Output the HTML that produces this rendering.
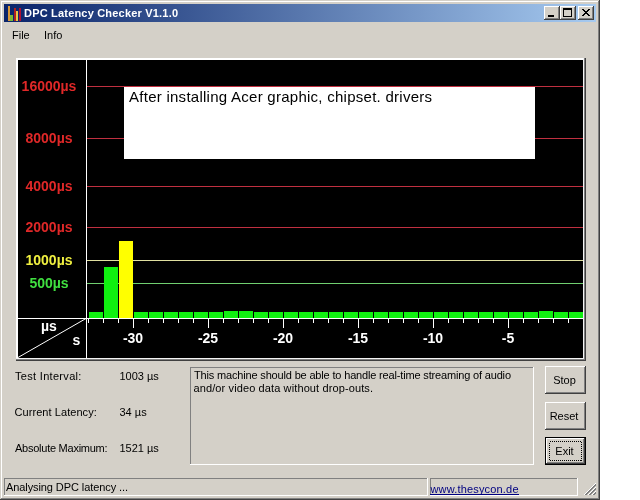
<!DOCTYPE html>
<html><head><meta charset="utf-8">
<style>
html,body{margin:0;padding:0;background:#fff;width:640px;height:500px;overflow:hidden}
svg{display:block;will-change:transform}
text{font-family:"Liberation Sans",sans-serif}
</style></head>
<body>
<svg width="640" height="500" viewBox="0 0 640 500" xmlns="http://www.w3.org/2000/svg" shape-rendering="crispEdges">
<defs>
<linearGradient id="tg" x1="0" y1="0" x2="1" y2="0">
<stop offset="0" stop-color="#0a246a"/>
<stop offset="1" stop-color="#a6caf0"/>
</linearGradient>
</defs>
<rect x="0" y="0" width="640" height="500" fill="#fff"/>
<!-- window frame -->
<rect x="0" y="0" width="600" height="500" fill="#404040"/>
<rect x="0" y="0" width="599" height="499" fill="#d4d0c8"/>
<rect x="1" y="1" width="598" height="498" fill="#808080"/>
<rect x="1" y="1" width="597" height="497" fill="#fff"/>
<rect x="2" y="2" width="596" height="496" fill="#d4d0c8"/>
<!-- title bar -->
<rect x="4" y="4" width="592" height="18" fill="url(#tg)"/>
<!-- icon -->
<rect x="8" y="6" width="2" height="15" fill="#d89838"/>
<rect x="10" y="15" width="3" height="6" fill="#78b838"/>
<rect x="14" y="8" width="2" height="13" fill="#b02020"/>
<rect x="16" y="11" width="2" height="10" fill="#e8c848"/>
<rect x="19" y="8" width="2" height="13" fill="#b01030"/>
<text x="24" y="17" font-size="11" font-weight="bold" fill="#fff" textLength="154" lengthAdjust="spacing">DPC Latency Checker V1.1.0</text>
<!-- caption buttons -->
<g>
<rect x="544" y="6" width="16" height="14" fill="#404040"/>
<rect x="544" y="6" width="15" height="13" fill="#fff"/>
<rect x="545" y="7" width="14" height="12" fill="#808080"/>
<rect x="545" y="7" width="13" height="11" fill="#d4d0c8"/>
<rect x="548" y="15" width="6" height="2" fill="#000"/>
</g>
<g>
<rect x="560" y="6" width="16" height="14" fill="#404040"/>
<rect x="560" y="6" width="15" height="13" fill="#fff"/>
<rect x="561" y="7" width="14" height="12" fill="#808080"/>
<rect x="561" y="7" width="13" height="11" fill="#d4d0c8"/>
<rect x="563" y="8" width="9" height="9" fill="#000"/>
<rect x="564" y="10" width="7" height="6" fill="#d4d0c8"/>
</g>
<g>
<rect x="578" y="6" width="16" height="14" fill="#404040"/>
<rect x="578" y="6" width="15" height="13" fill="#fff"/>
<rect x="579" y="7" width="14" height="12" fill="#808080"/>
<rect x="579" y="7" width="13" height="11" fill="#d4d0c8"/>
<rect x="582" y="9" width="1" height="1" fill="#000"/><rect x="583" y="9" width="1" height="1" fill="#000"/><rect x="588" y="9" width="1" height="1" fill="#000"/><rect x="589" y="9" width="1" height="1" fill="#000"/><rect x="583" y="10" width="1" height="1" fill="#000"/><rect x="584" y="10" width="1" height="1" fill="#000"/><rect x="587" y="10" width="1" height="1" fill="#000"/><rect x="588" y="10" width="1" height="1" fill="#000"/><rect x="584" y="11" width="1" height="1" fill="#000"/><rect x="585" y="11" width="1" height="1" fill="#000"/><rect x="586" y="11" width="1" height="1" fill="#000"/><rect x="587" y="11" width="1" height="1" fill="#000"/><rect x="585" y="12" width="1" height="1" fill="#000"/><rect x="586" y="12" width="1" height="1" fill="#000"/><rect x="584" y="13" width="1" height="1" fill="#000"/><rect x="585" y="13" width="1" height="1" fill="#000"/><rect x="586" y="13" width="1" height="1" fill="#000"/><rect x="587" y="13" width="1" height="1" fill="#000"/><rect x="583" y="14" width="1" height="1" fill="#000"/><rect x="584" y="14" width="1" height="1" fill="#000"/><rect x="587" y="14" width="1" height="1" fill="#000"/><rect x="588" y="14" width="1" height="1" fill="#000"/><rect x="582" y="15" width="1" height="1" fill="#000"/><rect x="583" y="15" width="1" height="1" fill="#000"/><rect x="588" y="15" width="1" height="1" fill="#000"/><rect x="589" y="15" width="1" height="1" fill="#000"/>
</g>
<!-- menu -->
<text x="12" y="39" font-size="11" fill="#000">File</text>
<text x="44" y="39" font-size="11" fill="#000">Info</text>

<!-- chart panel -->
<rect x="16" y="58" width="570" height="303" fill="#404040"/>
<rect x="16" y="58" width="569" height="302" fill="#808080"/>
<rect x="16" y="58" width="568" height="301" fill="#f4f4f4"/>
<rect x="16" y="58" width="567" height="300" fill="#fff"/>
<rect x="18" y="60" width="565" height="298" fill="#000"/>

<!-- grid lines -->
<rect x="87" y="86" width="496" height="1" fill="#c03040"/>
<rect x="87" y="138" width="496" height="1" fill="#c03040"/>
<rect x="87" y="186" width="496" height="1" fill="#c03040"/>
<rect x="87" y="227" width="496" height="1" fill="#c03040"/>
<rect x="87" y="260" width="496" height="1" fill="#e0e0a0"/>
<rect x="87" y="283" width="496" height="1" fill="#70d070"/>

<!-- labels -->
<g font-size="14" font-weight="bold" text-anchor="middle">
<text x="49" y="91" fill="#e02828">16000µs</text>
<text x="49" y="143" fill="#e02828">8000µs</text>
<text x="49" y="191" fill="#e02828">4000µs</text>
<text x="49" y="232" fill="#e02828">2000µs</text>
<text x="49" y="265" fill="#f0f040">1000µs</text>
<text x="49" y="288" fill="#40e040">500µs</text>
</g>

<!-- white annotation box -->
<rect x="124" y="87" width="411" height="72" fill="#fff"/>
<text x="129" y="102" font-size="15" fill="#000" textLength="303" lengthAdjust="spacing">After installing Acer graphic, chipset. drivers</text>

<!-- bars -->
<g id="bars" fill="#10f010"><rect x="89" y="312" width="14" height="6"/><rect x="104" y="267" width="14" height="51"/><rect x="119" y="241" width="14" height="77" fill="#ffff00"/><rect x="134" y="312" width="14" height="6"/><rect x="149" y="312" width="14" height="6"/><rect x="164" y="312" width="14" height="6"/><rect x="179" y="312" width="14" height="6"/><rect x="194" y="312" width="14" height="6"/><rect x="209" y="312" width="14" height="6"/><rect x="224" y="311" width="14" height="7"/><rect x="239" y="311" width="14" height="7"/><rect x="254" y="312" width="14" height="6"/><rect x="269" y="312" width="14" height="6"/><rect x="284" y="312" width="14" height="6"/><rect x="299" y="312" width="14" height="6"/><rect x="314" y="312" width="14" height="6"/><rect x="329" y="312" width="14" height="6"/><rect x="344" y="312" width="14" height="6"/><rect x="359" y="312" width="14" height="6"/><rect x="374" y="312" width="14" height="6"/><rect x="389" y="312" width="14" height="6"/><rect x="404" y="312" width="14" height="6"/><rect x="419" y="312" width="14" height="6"/><rect x="434" y="312" width="14" height="6"/><rect x="449" y="312" width="14" height="6"/><rect x="464" y="312" width="14" height="6"/><rect x="479" y="312" width="14" height="6"/><rect x="494" y="312" width="14" height="6"/><rect x="509" y="312" width="14" height="6"/><rect x="524" y="312" width="14" height="6"/><rect x="539" y="311" width="14" height="7"/><rect x="554" y="312" width="14" height="6"/><rect x="569" y="312" width="14" height="6"/></g>

<!-- axes -->
<rect x="86" y="60" width="1" height="298" fill="#fff"/>
<rect x="18" y="318" width="565" height="1" fill="#fff"/>
<line x1="18" y1="357.5" x2="86" y2="318.5" stroke="#fff" stroke-width="1" shape-rendering="auto"/>
<g id="ticks" fill="#fff"><rect x="88" y="319" width="1" height="4"/><rect x="103" y="319" width="1" height="4"/><rect x="118" y="319" width="1" height="4"/><rect x="133" y="319" width="1" height="9"/><rect x="148" y="319" width="1" height="4"/><rect x="163" y="319" width="1" height="4"/><rect x="178" y="319" width="1" height="4"/><rect x="193" y="319" width="1" height="4"/><rect x="208" y="319" width="1" height="9"/><rect x="223" y="319" width="1" height="4"/><rect x="238" y="319" width="1" height="4"/><rect x="253" y="319" width="1" height="4"/><rect x="268" y="319" width="1" height="4"/><rect x="283" y="319" width="1" height="9"/><rect x="298" y="319" width="1" height="4"/><rect x="313" y="319" width="1" height="4"/><rect x="328" y="319" width="1" height="4"/><rect x="343" y="319" width="1" height="4"/><rect x="358" y="319" width="1" height="9"/><rect x="373" y="319" width="1" height="4"/><rect x="388" y="319" width="1" height="4"/><rect x="403" y="319" width="1" height="4"/><rect x="418" y="319" width="1" height="4"/><rect x="433" y="319" width="1" height="9"/><rect x="448" y="319" width="1" height="4"/><rect x="463" y="319" width="1" height="4"/><rect x="478" y="319" width="1" height="4"/><rect x="493" y="319" width="1" height="4"/><rect x="508" y="319" width="1" height="9"/><rect x="523" y="319" width="1" height="4"/><rect x="538" y="319" width="1" height="4"/><rect x="553" y="319" width="1" height="4"/><rect x="568" y="319" width="1" height="4"/></g>
<g font-size="14" font-weight="bold" fill="#fff">
<text x="41" y="331">µs</text>
<text x="72.5" y="345">s</text>
</g>
<g id="xlabels" font-size="14" font-weight="bold" fill="#fff" text-anchor="middle"><text x="133" y="343">-30</text><text x="208" y="343">-25</text><text x="283" y="343">-20</text><text x="358" y="343">-15</text><text x="433" y="343">-10</text><text x="508" y="343">-5</text></g>

<!-- info labels -->
<g font-size="11" fill="#000">
<text x="15" y="380" textLength="66.4" lengthAdjust="spacing">Test Interval:</text>
<text x="14.5" y="416" textLength="82.3" lengthAdjust="spacing">Current Latency:</text>
<text x="15" y="452" textLength="92.6" lengthAdjust="spacing">Absolute Maximum:</text>
<text x="119.5" y="380">1003 µs</text>
<text x="119.5" y="416">34 µs</text>
<text x="119.5" y="452">1521 µs</text>
</g>

<!-- message box -->
<rect x="190" y="367" width="344" height="98" fill="#fff"/>
<rect x="190" y="367" width="343" height="97" fill="#808080"/>
<rect x="191" y="368" width="342" height="96" fill="#d4d0c8"/>
<g font-size="11" fill="#000">
<text x="194" y="379" textLength="317" lengthAdjust="spacing">This machine should be able to handle real-time streaming of audio</text>
<text x="193.5" y="392" textLength="179.5" lengthAdjust="spacing">and/or video data without drop-outs.</text>
</g>

<!-- buttons -->
<g>
<rect x="545" y="366" width="41" height="28" fill="#404040"/>
<rect x="545" y="366" width="40" height="27" fill="#fff"/>
<rect x="546" y="367" width="39" height="26" fill="#808080"/>
<rect x="546" y="367" width="38" height="25" fill="#d4d0c8"/>
<text x="564.5" y="384" font-size="11" text-anchor="middle" fill="#000">Stop</text>
</g>
<g>
<rect x="545" y="402" width="41" height="28" fill="#404040"/>
<rect x="545" y="402" width="40" height="27" fill="#fff"/>
<rect x="546" y="403" width="39" height="26" fill="#808080"/>
<rect x="546" y="403" width="38" height="25" fill="#d4d0c8"/>
<text x="564" y="420" font-size="11" text-anchor="middle" fill="#000">Reset</text>
</g>
<g>
<rect x="545" y="437" width="41" height="28" fill="#000"/>
<rect x="546" y="438" width="39" height="26" fill="#404040"/>
<rect x="546" y="438" width="38" height="25" fill="#fff"/>
<rect x="547" y="439" width="37" height="24" fill="#808080"/>
<rect x="547" y="439" width="36" height="23" fill="#d4d0c8"/>
<rect x="549.5" y="441.5" width="32" height="19" fill="none" stroke="#000" stroke-width="1" stroke-dasharray="1 1"/>
<text x="564.5" y="455" font-size="11" text-anchor="middle" fill="#000">Exit</text>
</g>

<!-- status bar -->
<rect x="4" y="478" width="424" height="18" fill="#fff"/>
<rect x="4" y="478" width="423" height="17" fill="#808080"/>
<rect x="5" y="479" width="422" height="16" fill="#d4d0c8"/>
<text x="6" y="491" font-size="11" fill="#000" textLength="122" lengthAdjust="spacing">Analysing DPC latency ...</text>
<rect x="430" y="478" width="148" height="18" fill="#fff"/>
<rect x="430" y="478" width="147" height="17" fill="#808080"/>
<rect x="431" y="479" width="146" height="16" fill="#d4d0c8"/>
<text x="430.5" y="493" font-size="11" fill="#000080" textLength="88" lengthAdjust="spacing">www.thesycon.de</text>
<rect x="430" y="494" width="89" height="1" fill="#000080"/>
<!-- size grip -->
<g><rect x="595" y="483" width="1" height="1" fill="#fff"/><rect x="594" y="484" width="1" height="1" fill="#fff"/><rect x="595" y="484" width="1" height="1" fill="#808080"/><rect x="593" y="485" width="1" height="1" fill="#fff"/><rect x="594" y="485" width="1" height="1" fill="#808080"/><rect x="595" y="485" width="1" height="1" fill="#808080"/><rect x="592" y="486" width="1" height="1" fill="#fff"/><rect x="593" y="486" width="1" height="1" fill="#808080"/><rect x="594" y="486" width="1" height="1" fill="#808080"/><rect x="591" y="487" width="1" height="1" fill="#fff"/><rect x="592" y="487" width="1" height="1" fill="#808080"/><rect x="593" y="487" width="1" height="1" fill="#808080"/><rect x="595" y="487" width="1" height="1" fill="#fff"/><rect x="590" y="488" width="1" height="1" fill="#fff"/><rect x="591" y="488" width="1" height="1" fill="#808080"/><rect x="592" y="488" width="1" height="1" fill="#808080"/><rect x="594" y="488" width="1" height="1" fill="#fff"/><rect x="595" y="488" width="1" height="1" fill="#808080"/><rect x="589" y="489" width="1" height="1" fill="#fff"/><rect x="590" y="489" width="1" height="1" fill="#808080"/><rect x="591" y="489" width="1" height="1" fill="#808080"/><rect x="593" y="489" width="1" height="1" fill="#fff"/><rect x="594" y="489" width="1" height="1" fill="#808080"/><rect x="595" y="489" width="1" height="1" fill="#808080"/><rect x="588" y="490" width="1" height="1" fill="#fff"/><rect x="589" y="490" width="1" height="1" fill="#808080"/><rect x="590" y="490" width="1" height="1" fill="#808080"/><rect x="592" y="490" width="1" height="1" fill="#fff"/><rect x="593" y="490" width="1" height="1" fill="#808080"/><rect x="594" y="490" width="1" height="1" fill="#808080"/><rect x="587" y="491" width="1" height="1" fill="#fff"/><rect x="588" y="491" width="1" height="1" fill="#808080"/><rect x="589" y="491" width="1" height="1" fill="#808080"/><rect x="591" y="491" width="1" height="1" fill="#fff"/><rect x="592" y="491" width="1" height="1" fill="#808080"/><rect x="593" y="491" width="1" height="1" fill="#808080"/><rect x="595" y="491" width="1" height="1" fill="#fff"/><rect x="586" y="492" width="1" height="1" fill="#fff"/><rect x="587" y="492" width="1" height="1" fill="#808080"/><rect x="588" y="492" width="1" height="1" fill="#808080"/><rect x="590" y="492" width="1" height="1" fill="#fff"/><rect x="591" y="492" width="1" height="1" fill="#808080"/><rect x="592" y="492" width="1" height="1" fill="#808080"/><rect x="594" y="492" width="1" height="1" fill="#fff"/><rect x="595" y="492" width="1" height="1" fill="#808080"/><rect x="585" y="493" width="1" height="1" fill="#fff"/><rect x="586" y="493" width="1" height="1" fill="#808080"/><rect x="587" y="493" width="1" height="1" fill="#808080"/><rect x="589" y="493" width="1" height="1" fill="#fff"/><rect x="590" y="493" width="1" height="1" fill="#808080"/><rect x="591" y="493" width="1" height="1" fill="#808080"/><rect x="593" y="493" width="1" height="1" fill="#fff"/><rect x="594" y="493" width="1" height="1" fill="#808080"/><rect x="595" y="493" width="1" height="1" fill="#808080"/><rect x="584" y="494" width="1" height="1" fill="#fff"/><rect x="585" y="494" width="1" height="1" fill="#808080"/><rect x="586" y="494" width="1" height="1" fill="#808080"/><rect x="588" y="494" width="1" height="1" fill="#fff"/><rect x="589" y="494" width="1" height="1" fill="#808080"/><rect x="590" y="494" width="1" height="1" fill="#808080"/><rect x="592" y="494" width="1" height="1" fill="#fff"/><rect x="593" y="494" width="1" height="1" fill="#808080"/><rect x="594" y="494" width="1" height="1" fill="#808080"/></g>
</svg>
</body></html>
